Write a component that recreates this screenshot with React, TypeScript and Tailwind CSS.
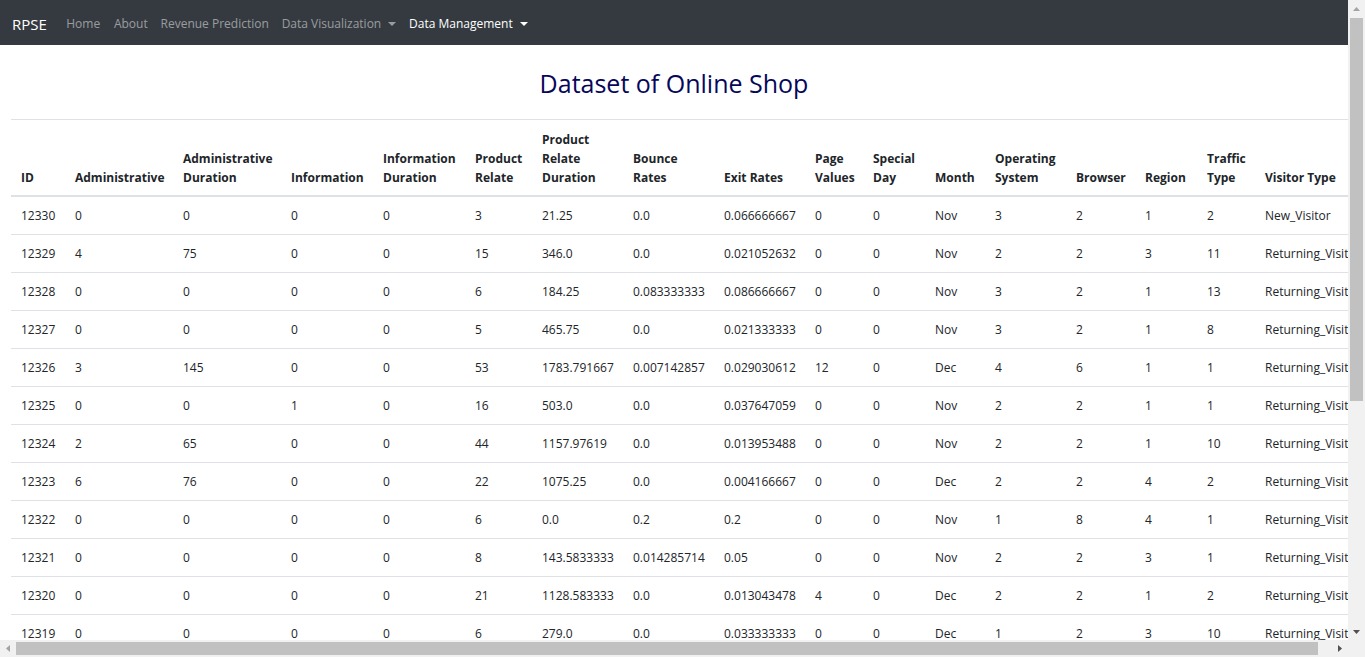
import React from "react";

type Row = (string | number)[];

const rows: Row[] = [
  [12330, 0, 0, 0, 0, 3, "21.25", "0.0", "0.066666667", 0, 0, "Nov", 3, 2, 1, 2, "New_Visitor"],
  [12329, 4, 75, 0, 0, 15, "346.0", "0.0", "0.021052632", 0, 0, "Nov", 2, 2, 3, 11, "Returning_Visitor"],
  [12328, 0, 0, 0, 0, 6, "184.25", "0.083333333", "0.086666667", 0, 0, "Nov", 3, 2, 1, 13, "Returning_Visitor"],
  [12327, 0, 0, 0, 0, 5, "465.75", "0.0", "0.021333333", 0, 0, "Nov", 3, 2, 1, 8, "Returning_Visitor"],
  [12326, 3, 145, 0, 0, 53, "1783.791667", "0.007142857", "0.029030612", 12, 0, "Dec", 4, 6, 1, 1, "Returning_Visitor"],
  [12325, 0, 0, 1, 0, 16, "503.0", "0.0", "0.037647059", 0, 0, "Nov", 2, 2, 1, 1, "Returning_Visitor"],
  [12324, 2, 65, 0, 0, 44, "1157.97619", "0.0", "0.013953488", 0, 0, "Nov", 2, 2, 1, 10, "Returning_Visitor"],
  [12323, 6, 76, 0, 0, 22, "1075.25", "0.0", "0.004166667", 0, 0, "Dec", 2, 2, 4, 2, "Returning_Visitor"],
  [12322, 0, 0, 0, 0, 6, "0.0", "0.2", "0.2", 0, 0, "Nov", 1, 8, 4, 1, "Returning_Visitor"],
  [12321, 0, 0, 0, 0, 8, "143.5833333", "0.014285714", "0.05", 0, 0, "Nov", 2, 2, 3, 1, "Returning_Visitor"],
  [12320, 0, 0, 0, 0, 21, "1128.583333", "0.0", "0.013043478", 4, 0, "Dec", 2, 2, 1, 2, "Returning_Visitor"],
  [12319, 0, 0, 0, 0, 6, "279.0", "0.0", "0.033333333", 0, 0, "Dec", 1, 2, 3, 10, "Returning_Visitor"],
  [12318, 0, 0, 0, 0, 3, "21.25", "0.0", "0.066666667", 0, 0, "Nov", 2, 2, 1, 2, "Returning_Visitor"],
];

const headers: { lines: string[]; w: number }[] = [
  { lines: ["ID"], w: 54 },
  { lines: ["Administrative"], w: 108 },
  { lines: ["Administrative", "Duration"], w: 108 },
  { lines: ["Information"], w: 92 },
  { lines: ["Information", "Duration"], w: 92 },
  { lines: ["Product", "Relate"], w: 67 },
  { lines: ["Product", "Relate", "Duration"], w: 91 },
  { lines: ["Bounce", "Rates"], w: 91 },
  { lines: ["Exit Rates"], w: 91 },
  { lines: ["Page", "Values"], w: 58 },
  { lines: ["Special", "Day"], w: 62 },
  { lines: ["Month"], w: 60 },
  { lines: ["Operating", "System"], w: 81 },
  { lines: ["Browser"], w: 69 },
  { lines: ["Region"], w: 62 },
  { lines: ["Traffic", "Type"], w: 58 },
  { lines: ["Visitor Type"], w: 124 },
];

function Caret() {
  return (
    <span className="ml-[7px] inline-block h-0 w-0 border-x-[4px] border-t-[4px] border-x-transparent border-t-current align-[2px]" />
  );
}

function Tri({ dir, color }: { dir: "up" | "down" | "left" | "right"; color: string }) {
  const pts =
    dir === "up"
      ? "0,4 7,4 3.5,0"
      : dir === "down"
      ? "0,0 7,0 3.5,4"
      : dir === "left"
      ? "4,0 4,7 0,3.5"
      : "0,0 0,7 4,3.5";
  const w = dir === "up" || dir === "down" ? 7 : 4;
  const h = dir === "up" || dir === "down" ? 4 : 7;
  return (
    <svg width={w} height={h} viewBox={`0 0 ${w} ${h}`}>
      <polygon points={pts} fill={color} />
    </svg>
  );
}

export default function App() {
  return (
    <div className="grid h-[657px] w-[1365px] grid-cols-[1348px_17px] grid-rows-[640px_17px] overflow-hidden bg-white font-['Open_Sans','Noto_Sans',sans-serif] text-[12px] text-[#212529]">
      <div className="overflow-hidden">
        <nav className="flex h-[45px] items-center bg-[#343a40] pl-[12px] pt-[2px]">
          <span className="mr-[13px] text-[15px] leading-[24px] text-white">RPSE</span>
          <div className="flex items-center text-[12px] leading-[19px]">
            <span className="pl-[6.4px] pr-[7.4px] text-[rgba(255,255,255,0.5)]">Home</span>
            <span className="px-[6.4px] text-[rgba(255,255,255,0.5)]">About</span>
            <span className="px-[6.4px] text-[rgba(255,255,255,0.5)]">Revenue Prediction</span>
            <span className="px-[6.4px] text-[rgba(255,255,255,0.5)]">
              Data Visualization
              <Caret />
            </span>
            <span className="px-[6.4px] text-white">
              Data Management
              <Caret />
            </span>
          </div>
        </nav>
        <div className="px-[11px]">
          <h2 className="pb-[20px] pt-[23px] text-center text-[25px] font-normal leading-[31px] text-[#07075a]">
            Dataset of Online Shop
          </h2>
          <table className="w-[1368px] table-fixed border-collapse">
            <colgroup>
              {headers.map((h, i) => (
                <col key={i} style={{ width: h.w }} />
              ))}
            </colgroup>
            <thead>
              <tr>
                {headers.map((h, i) => (
                  <th
                    key={i}
                    className="whitespace-nowrap border-b-2 border-t border-[#dee2e6] px-[10px] pb-[8px] pt-[10px] text-left align-bottom font-bold leading-[19px]"
                  >
                    {h.lines.map((l, j) => (
                      <div key={j}>{l}</div>
                    ))}
                  </th>
                ))}
              </tr>
            </thead>
            <tbody>
              {rows.map((r, i) => (
                <tr key={i}>
                  {r.map((c, j) => (
                    <td
                      key={j}
                      className="overflow-hidden whitespace-nowrap border-t border-[#dee2e6] px-[10px] py-[9px] align-top leading-[19px]"
                    >
                      {c}
                    </td>
                  ))}
                </tr>
              ))}
            </tbody>
          </table>
        </div>
      </div>

      {/* vertical scrollbar */}
      <div className="flex flex-col items-center bg-[#f1f1f1]">
        <div className="flex h-[17px] w-full items-center justify-center">
          <Tri dir="up" color="#a3a3a3" />
        </div>
        <div className="flex w-full flex-1 flex-col items-center">
          <div className="mt-[1px] h-[383px] w-[13px] bg-[#c1c1c1]" />
        </div>
        <div className="flex h-[17px] w-full items-center justify-center">
          <Tri dir="down" color="#505050" />
        </div>
      </div>

      {/* horizontal scrollbar */}
      <div className="flex items-center bg-[#f1f1f1]">
        <div className="flex h-full w-[16px] items-center justify-center">
          <Tri dir="left" color="#a3a3a3" />
        </div>
        <div className="flex h-full flex-1 items-center">
          <div className="h-[13px] w-[1302px] bg-[#c1c1c1]" />
        </div>
        <div className="flex h-full w-[17px] items-center justify-center">
          <Tri dir="right" color="#505050" />
        </div>
      </div>

      <div className="bg-[#f1f1f1]" />
    </div>
  );
}
